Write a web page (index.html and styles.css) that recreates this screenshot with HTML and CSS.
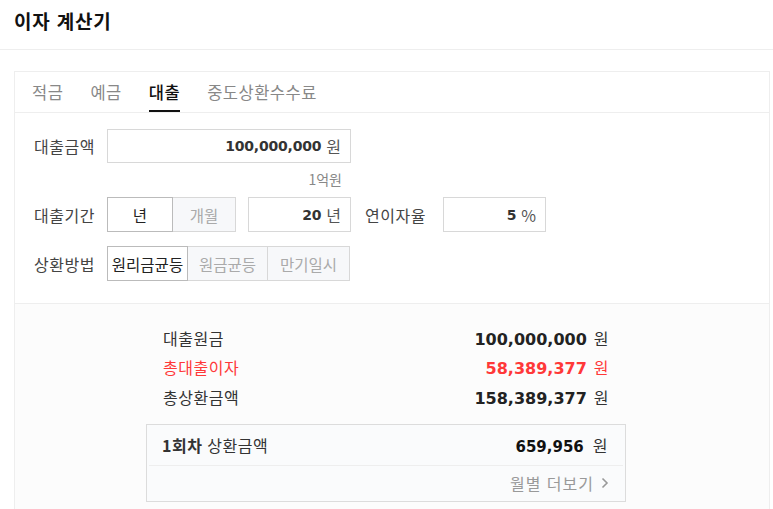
FILE: index.html
```html
<!DOCTYPE html>
<html lang="ko">
<head>
    <meta charset="UTF-8">
    <meta name="viewport" content="width=device-width, initial-scale=1.0">
    <title>이자 계산기</title>
    <link rel="stylesheet" href="styles.css">
</head>
<body>
    <div class="header">
        <h1>이자 계산기</h1>
    </div>
    <div class="card">
        <ul class="tabs">
            <li>적금</li>
            <li>예금</li>
            <li class="active">대출</li>
            <li>중도상환수수료</li>
        </ul>
        <div class="form">
            <div class="row">
                <span class="label">대출금액</span>
                <div class="field wide"><span class="num">100,000,000</span><span class="unit">원</span></div>
            </div>
            <div class="hint">1억원</div>
            <div class="row">
                <span class="label">대출기간</span>
                <div class="seg period">
                    <span class="on">년</span>
                    <span>개월</span>
                </div>
                <div class="field short"><span class="num">20</span><span class="unit">년</span></div>
                <span class="label rate">연이자율</span>
                <div class="field short"><span class="num">5</span><span class="unit">%</span></div>
            </div>
            <div class="row">
                <span class="label">상환방법</span>
                <div class="seg method">
                    <span class="on">원리금균등</span>
                    <span>원금균등</span>
                    <span>만기일시</span>
                </div>
            </div>
        </div>
        <div class="result">
            <div class="result-inner">
                <div class="line">
                    <span>대출원금</span>
                    <span><b>100,000,000</b> 원</span>
                </div>
                <div class="line red">
                    <span>총대출이자</span>
                    <span><b>58,389,377</b> 원</span>
                </div>
                <div class="line">
                    <span>총상환금액</span>
                    <span><b>158,389,377</b> 원</span>
                </div>
                <div class="box">
                    <div class="box-top">
                        <span><b>1회차</b> 상환금액</span>
                        <span><b>659,956</b> 원</span>
                    </div>
                    <div class="box-more">
                        월별 더보기
                        <svg width="10" height="12" viewBox="0 0 10 12"><path d="M2.5 1.5 L7 6 L2.5 10.5" fill="none" stroke="#999" stroke-width="1.6"/></svg>
                    </div>
                </div>
            </div>
        </div>
    </div>
</body>
</html>
```

FILE: styles.css
```css
body {
    margin: 0;
    font-family: "Noto Sans CJK KR", "Noto Sans", sans-serif;
    color: #333;
    background-color: white;
}

.header {
    height: 50px;
    border-bottom: 1px solid #eee;
    padding-left: 14px;
    box-sizing: border-box;
}

.header h1 {
    margin: 0;
    font-size: 19px;
    line-height: 42px;
    font-weight: bold;
    color: #111;
    letter-spacing: 0.8px;
}

.card {
    margin: 21px 0 0 14px;
    width: 756px;
    box-sizing: border-box;
    border: 1px solid #eee;
}

.tabs {
    list-style: none;
    margin: 0;
    padding: 0 0 0 17px;
    display: flex;
    gap: 27px;
    height: 40px;
    border-bottom: 1px solid #eee;
}

.tabs li {
    font-size: 16.5px;
    line-height: 40px;
    color: #888;
    position: relative;
    letter-spacing: 0.5px;
}

.tabs li.active {
    color: #111;
    font-weight: 500;
}

.tabs li.active::after {
    content: "";
    position: absolute;
    left: 0;
    right: 0;
    bottom: 0;
    height: 2px;
    background: #111;
}

.form {
    padding: 15px 0 22px 19px;
    border-bottom: 1px solid #eee;
}

.row {
    display: flex;
    align-items: center;
    height: 35px;
}

.row + .row {
    margin-top: 14px;
}

.label {
    width: 73px;
    font-size: 16px;
    color: #444;
    letter-spacing: 0.5px;
}

.label.rate {
    width: 78px;
    margin-left: 14px;
}

.field {
    height: 35px;
    box-sizing: border-box;
    border: 1px solid #d8d8d8;
    display: flex;
    align-items: center;
    justify-content: flex-end;
    padding-right: 9px;
    gap: 5px;
}

.field.wide {
    width: 244px;
    height: 34px;
}

.field.short {
    width: 103px;
}

.num {
    font-family: "DejaVu Sans", sans-serif;
    font-weight: bold;
    font-size: 14px;
    color: #333;
    letter-spacing: -0.2px;
}

.unit {
    font-size: 16px;
    color: #555;
}

.hint {
    width: 235px;
    margin-left: 73px;
    text-align: right;
    font-size: 14px;
    color: #888;
    line-height: 20px;
    margin-top: 6px;
    margin-bottom: 8px;
}

.seg {
    display: flex;
    height: 35px;
}

.seg span {
    box-sizing: border-box;
    border: 1px solid #d8d8d8;
    background: #f7f8fa;
    color: #aaa;
    font-size: 15.5px;
    display: flex;
    align-items: center;
    justify-content: center;
}

.seg span + span {
    border-left: none;
}

.seg span.on {
    background: white;
    color: #222;
    border-color: #bbb;
}

.period {
    margin-right: 12px;
}

.period span:nth-child(1) { width: 66px; }
.period span:nth-child(2) { width: 63px; }

.method span:nth-child(1) { width: 81px; }
.method span:nth-child(2) { width: 80px; }
.method span:nth-child(3) { width: 82px; }

.result {
    background: #fcfcfc;
    padding: 19px 0 20px 131px;
}

.result-inner {
    width: 480px;
}

.line {
    display: flex;
    justify-content: space-between;
    align-items: center;
    height: 29.5px;
    padding: 0 17px;
    font-size: 16px;
    color: #333;
    letter-spacing: 0.5px;
}

.line b {
    font-family: "DejaVu Sans", sans-serif;
    font-size: 16px;
    color: #222;
    margin-right: 2px;
    letter-spacing: 0;
}

.line.red,
.line.red b {
    color: #ff3838;
}

.box {
    margin-top: 12px;
    border: 1px solid #dcdcdc;
    background: #fafbfc;
}

.box-top {
    display: flex;
    justify-content: space-between;
    align-items: center;
    height: 40px;
    padding: 0 15px 0 13px;
    margin: 0 2px;
    border-bottom: 1px solid #eee;
    font-size: 16px;
    color: #333;
    letter-spacing: 0.5px;
}

.box-top b {
    font-weight: bold;
}

.box-top span:last-child b {
    font-family: "DejaVu Sans", sans-serif;
    font-size: 15px;
    color: #111;
    margin-right: 4px;
    letter-spacing: 0;
}

.box-more {
    height: 35px;
    display: flex;
    align-items: center;
    justify-content: flex-end;
    gap: 6px;
    padding-right: 15px;
    font-size: 16px;
    color: #999;
    letter-spacing: 1px;
}
```
